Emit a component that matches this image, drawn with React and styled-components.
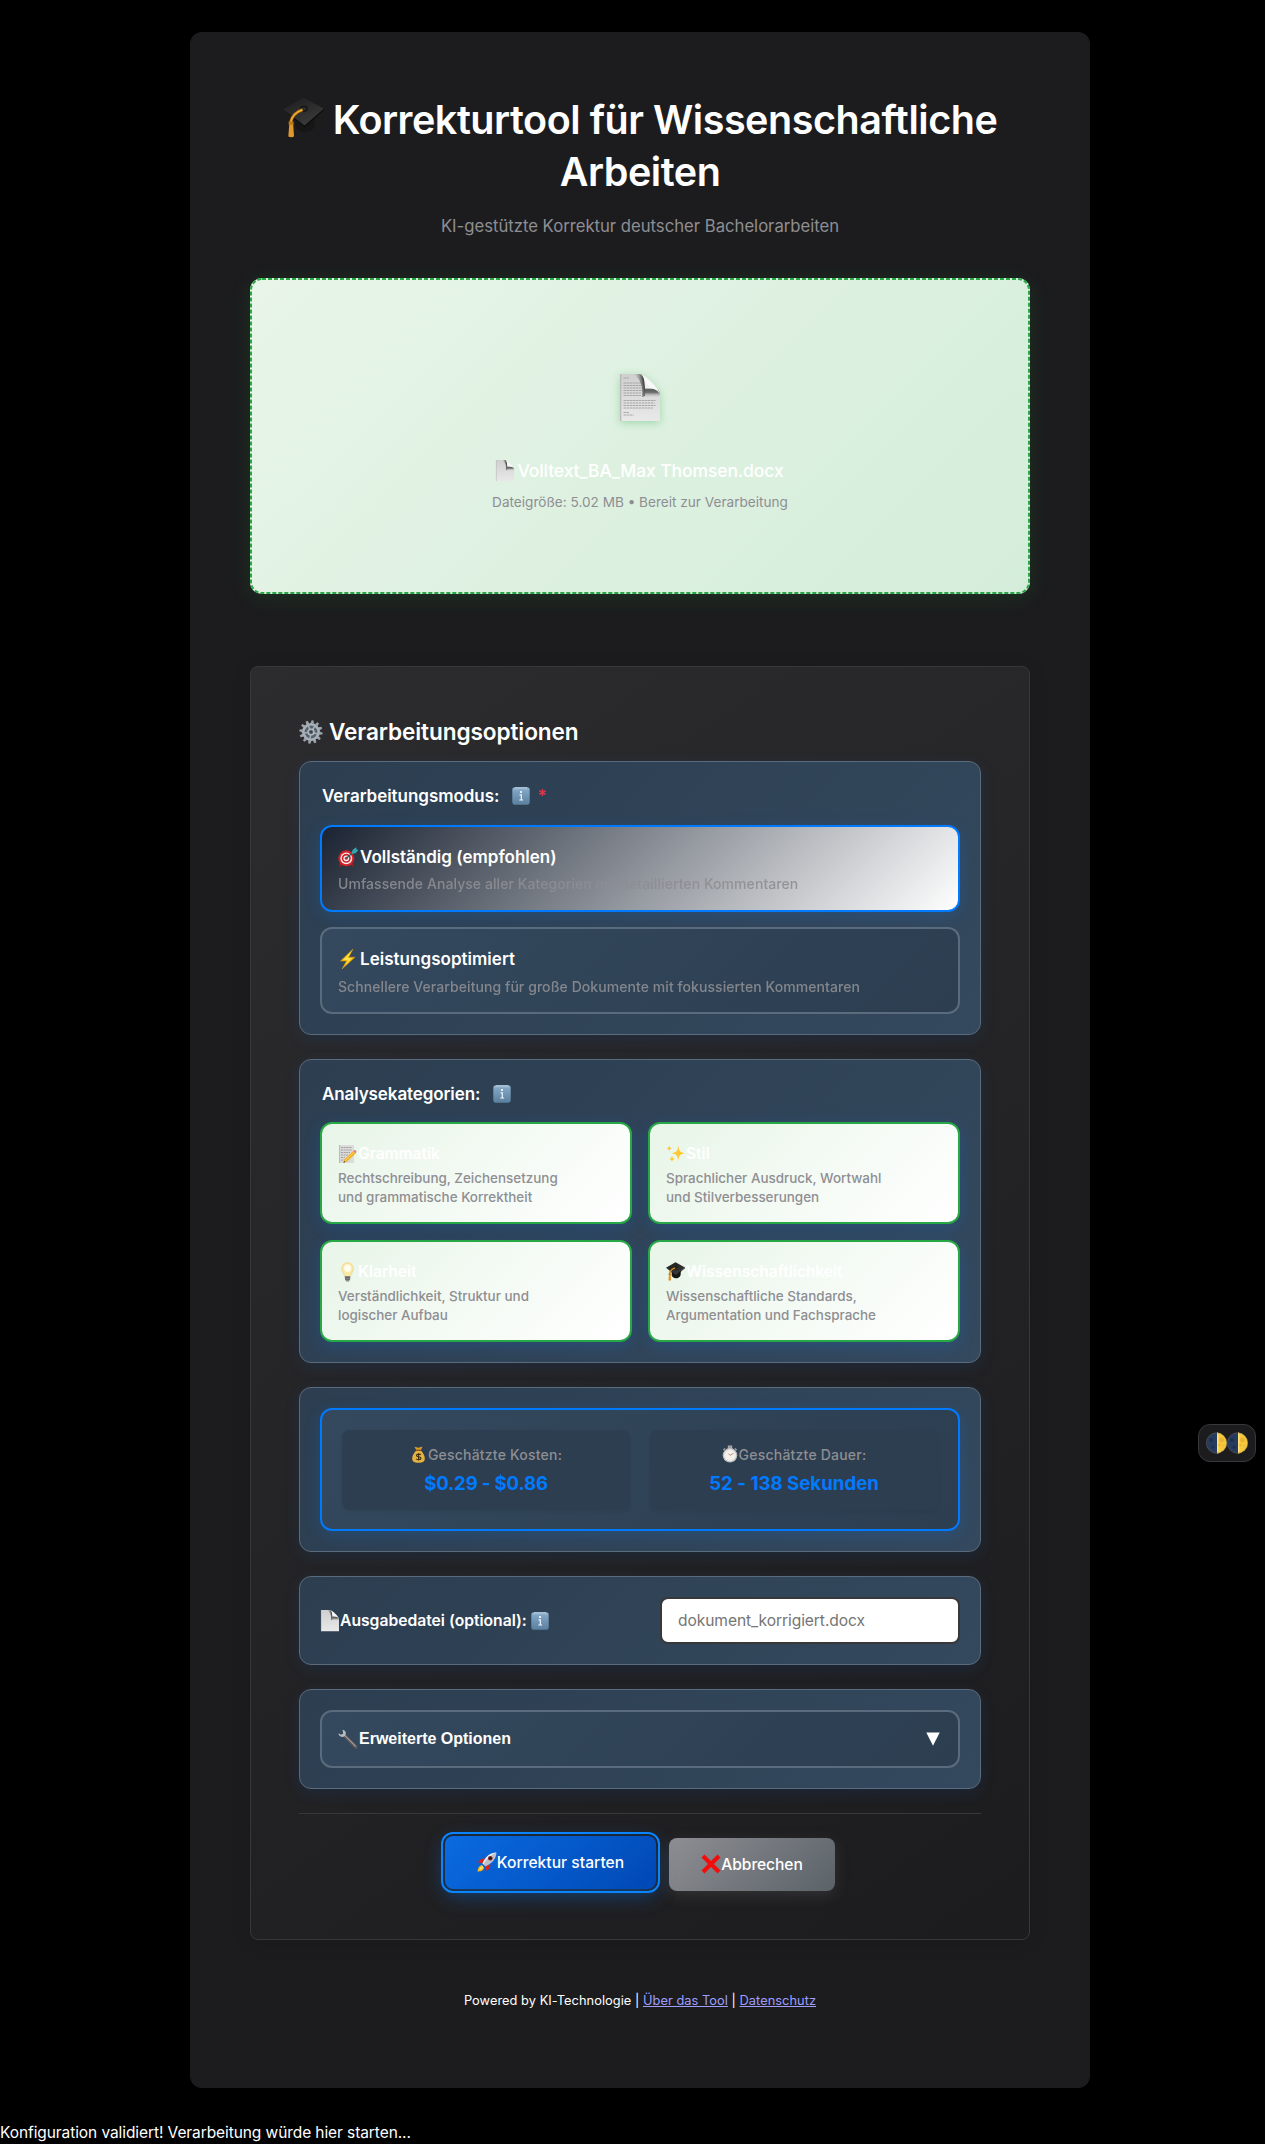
import React from "react";
import styled, { createGlobalStyle, css } from "styled-components";

const sans = `Inter, "Liberation Sans", sans-serif`;

const GlobalStyle = createGlobalStyle`
  * { box-sizing: border-box; }
  body {
    margin: 0;
    background: #000;
    color: #fff;
    font-family: ${sans};
  }
  h1, h2, p { margin: 0; }
`;

/* ---------- icons ---------- */

const Svg = styled.svg`
  display: block;
  flex: none;
  overflow: visible;
`;

const CapIcon = ({ size = 20 }) => (
  <Svg width={size} height={size} viewBox="0 0 40 40">
    <defs>
      <linearGradient id="capTop" x1="0" y1="0" x2="0.6" y2="1">
        <stop offset="0" stopColor="#1b1b1b" />
        <stop offset="1" stopColor="#3b3b3b" />
      </linearGradient>
    </defs>
    <path d="M12 20v9c3 5 9 6 12 5 4-1 7-4 7-8v-9z" fill="#161616" />
    <path d="M20 .5 40 11.500 21 28 0 12z" fill="url(#capTop)" />
    <path d="M0 12 21 28l19-16.500-.2 1.500L21 29.500z" fill="#0c0c0c" />
    <ellipse cx="20.500" cy="11.500" rx="3.200" ry="2.400" fill="#2b2b2b" stroke="#111" />
    <path d="M19 12.500c-6 2-10 5-11.500 12" fill="none" stroke="#a86d12" strokeWidth="3" />
    <path d="M19 12.500c-6 2-10 5-11.500 12" fill="none" stroke="#f0a830" strokeWidth="1.600" />
    <path d="M6.200 25h3.600l1 13.500c-2 1-4 1-5.600 0z" fill="#e0962a" />
    <path d="M5.500 24h4.800v3H5.500z" fill="#b87818" />
  </Svg>
);

const PageIcon = ({ width = 18, lines = true, id }) => (
  <Svg width={width} height={(width * 47) / 40} viewBox="0 0 40 47">
    <defs>
      <linearGradient id={`${id}p`} x1="0" y1="0" x2="0" y2="1">
        <stop offset="0" stopColor="#cfcfcf" />
        <stop offset="1" stopColor="#e9e9e9" />
      </linearGradient>
      <linearGradient id={`${id}a`} x1="0" y1="0.600" x2="1" y2="0.350">
        <stop offset="0.100" stopColor="#cfcfcf" stopOpacity="0" />
        <stop offset="0.900" stopColor="#444" />
      </linearGradient>
      <linearGradient id={`${id}b`} x1="0" y1="0" x2="0" y2="1">
        <stop offset="0" stopColor="#5a5a5a" />
        <stop offset="0.400" stopColor="#6a6a6a" />
        <stop offset="1" stopColor="#dedede" stopOpacity="0" />
      </linearGradient>
      <linearGradient id={`${id}c`} x1="0" y1="1" x2="1" y2="0">
        <stop offset="0" stopColor="#c9c9c9" />
        <stop offset="0.500" stopColor="#fafafa" />
        <stop offset="1" stopColor="#e4e4e4" />
      </linearGradient>
    </defs>
    <path d="M0 0h19c4.500 0 6 4 6 15h8c5 0 7 2 7 6v26H0z" fill={`url(#${id}p)`} />
    <path d="M.7 0v47" stroke="#b5b5b5" strokeWidth="1.200" />
    {lines && (
      <path
        d="M3.500 4h6M3.500 9h19M3.500 11.500h19M3.500 14h19M3.500 16.500h19M3.500 19h18M3.500 21.500h18M3.500 26.500h32M3.500 29h31M3.500 31.500h32M3.500 34h30M3.500 38.500h6M3.500 41h10"
        stroke="#a2a2a2"
        strokeWidth="0.900"
        strokeDasharray="2.500 0.500"
      />
    )}
    <path d="M13 0h6c4.500 0 6 4 6 15v7l-3 1c1-10-1-18-9-23z" fill={`url(#${id}a)`} />
    <path d="M24.500 14.500H33c5 0 7 2.500 7 6.500 0 1-3 3-8 3h-7.500z" fill={`url(#${id}b)`} />
    <path d="M19 0c4.500 1 6 5 6 14.600 8-.6 13 .4 15 6.400C39.500 14.500 27 1.500 19 0z" fill={`url(#${id}c)`} />
  </Svg>
);

const teeth = Array.from({ length: 12 }, (_, i) => i * 30);

const GearIcon = () => (
  <Svg width="24" height="24" viewBox="-12 -12 24 24">
    {teeth.map((a) => (
      <path key={a} d="M-1.700-8.500-1-11.700H1l.7 3.200z" fill="#9aa3ac" transform={`rotate(${a + 8})`} />
    ))}
    <circle r="7.700" fill="#59616b" stroke="#a9b2ba" strokeWidth="2.600" />
    <path d="M0 0 7 2M0 0-1 7M0 0-7 1M0 0-3-7M0 0 4-6" stroke="#a3abb3" strokeWidth="1.600" />
    <circle r="3.600" fill="#b9c1c8" />
    <circle r="2.100" fill="#3a4048" stroke="#7c858e" strokeWidth="0.700" />
  </Svg>
);

const InfoIcon = ({ id }) => (
  <Svg width="18" height="18" viewBox="0 0 18 18">
    <defs>
      <linearGradient id={id} x1="0" y1="0" x2="0" y2="1">
        <stop offset="0" stopColor="#a3c0d8" />
        <stop offset="0.200" stopColor="#7fa3c2" />
        <stop offset="1" stopColor="#5b7f9f" />
      </linearGradient>
    </defs>
    <rect x="0.300" y="0.300" width="17.400" height="17.400" rx="2.800" fill={`url(#${id})`} />
    <path d="M3 .8h12" stroke="#c4d8e8" strokeWidth="0.800" />
    <circle cx="9" cy="5" r="1.100" fill="#fff" />
    <path d="M7.600 7.800h1.700v5M7.300 13h3.800" fill="none" stroke="#f0f5f9" strokeWidth="1.200" />
  </Svg>
);

const TargetIcon = () => (
  <Svg width="20" height="20" viewBox="0 0 20 20">
    <path d="m3 15-1 4.500M13 16l2 3" stroke="#9c2020" strokeWidth="2" />
    <circle cx="8.300" cy="11.300" r="8" fill="#d3202a" />
    <circle cx="8.300" cy="11.300" r="5.900" fill="#f2eeee" />
    <circle cx="8.300" cy="11.300" r="4.500" fill="#d3202a" />
    <circle cx="8.300" cy="11.300" r="2.900" fill="#f2eeee" />
    <circle cx="8.300" cy="11.300" r="1.500" fill="#d3202a" />
    <path d="m8.300 11.300 8-7" stroke="#275f66" strokeWidth="1.300" />
    <path d="m13.500 5.500 1.500-3 3.300-2.300.3 2.300 1.800.6-2.400 3-3.500 1z" fill="#35a5ad" />
  </Svg>
);

const BoltIcon = () => (
  <Svg width="20" height="20" viewBox="0 0 20 20">
    <path d="M15 0 2.500 12h6L4 20 17 8.200h-6.300z" fill="#f5b800" stroke="#d79a14" strokeWidth="0.500" />
    <path d="M13.500 2 5 11h5l-3 6 7-8H9.500z" fill="#ffe14d" />
  </Svg>
);

const MemoIcon = () => (
  <Svg width="19" height="20" viewBox="0 0 19 20">
    <path d="M1 1h15v18H1z" fill="#dcdcdc" />
    <path d="M1 1h1.200v18H1z" fill="#bbb" />
    <path d="M3 3.500h11M3 6h11M3 8.500h9M3 11h7M3 13.500h4M3 16h3" stroke="#9a9a9a" strokeWidth="0.900" strokeDasharray="2 .6" />
    <path d="M15 7.200 17.500 9.500 9 17.500 5.500 18.700 6.500 15.200z" fill="#f0b21e" />
    <path d="m16 8.200-9 8.500" stroke="#fbd765" strokeWidth="0.900" />
    <path d="M15 7.200c1-1.200 1.800-1.700 2.600-1 .9.700 1.300 1.600-.1 3.300z" fill="#ee7d86" />
    <path d="m5.500 18.700.5-1.800 1.300 1.200z" fill="#333" />
  </Svg>
);

const SparkIcon = () => (
  <Svg width="19" height="19" viewBox="0 0 19 19">
    <path
      d="M12.300 1.500c.7 5.500 1.500 6.500 6.500 7.700-5 1-5.800 2.200-6.500 7.600-.7-5.400-1.500-6.600-6.500-7.600 5-1.200 5.800-2.200 6.500-7.700zM3.300 1c.3 2.200.7 2.900 2.700 3.400-2 .5-2.400 1-2.700 3.200C3 5.400 2.600 4.900.6 4.400 2.600 3.900 3 3.200 3.300 1zM6 11.500c.4 2.300.8 2.900 2.800 3.400-2 .4-2.400 1.100-2.800 3.400-.4-2.300-.8-3-2.800-3.400 2-.5 2.400-1.100 2.800-3.400z"
      fill="#ffc933"
    />
  </Svg>
);

const BulbIcon = () => (
  <Svg width="19" height="20" viewBox="0 0 19 20">
    <path d="M9.500.8c3.500 0 5.800 2.500 5.800 5.700 0 3.500-2.300 4.800-3 8H6.800c-.7-3.200-3-4.500-3-8C3.800 3.300 6.100.8 9.500.8z" fill="#fbe9a8" stroke="#ecd28a" strokeWidth="0.800" />
    <ellipse cx="9.500" cy="6.200" rx="3.400" ry="3.700" fill="#fffdf0" />
    <path d="M6.900 14h5.300v3l-1.200 2.400H8.100L6.900 17z" fill="#8d8d8d" />
    <path d="M6.900 15.300h5.300M7 17.200h5" stroke="#4f4f4f" strokeWidth="0.700" />
  </Svg>
);

const MoneyIcon = () => (
  <Svg width="13" height="17" viewBox="0 0 13 17">
    <path d="M2.500.8 6.500 1.800 10.500.5 8.800 4.500H4.400z" fill="#d99c2b" />
    <path d="M4.300 4.500h4.600c1.700 2 3.900 4.500 3.900 8 0 3-2 4.300-6.300 4.300S.2 15.500.2 12.500c0-3.500 2.300-6 4.100-8z" fill="#e6b23f" />
    <path d="M4 4.300h5.100" stroke="#8a4f1c" strokeWidth="1.200" />
    <path d="M8.800 8.800c-.5-.9-4.300-1.200-4.300.7 0 1.800 4.500.8 4.500 2.700 0 1.800-4 1.700-4.800.5M6.600 7.200v7.400" fill="none" stroke="#3c2c10" strokeWidth="1.100" />
  </Svg>
);

const TimerIcon = () => (
  <Svg width="16" height="17" viewBox="0 0 16 17">
    <path d="M6.400 0h3.200v3H6.400zM1.300 4l2-1.500M14.700 4l-2-1.500" fill="#999" stroke="#aaa" strokeWidth="1.200" />
    <circle cx="8" cy="9.300" r="7.300" fill="#bdbdbd" />
    <circle cx="8" cy="9.300" r="6" fill="#f4f1ec" />
    <path d="M8 9.300 6.300 7.500M8 9.300l3.500-2" stroke="#9b6b50" strokeWidth="0.700" />
    <circle cx="8" cy="9.300" r="4.900" fill="none" stroke="#bbb" strokeWidth="0.700" strokeDasharray=".5 2" />
  </Svg>
);

const WrenchIcon = () => (
  <Svg width="20" height="20" viewBox="0 0 20 20">
    <path d="m7 7 11 11" stroke="#5e5558" strokeWidth="3.400" strokeLinecap="round" />
    <path d="m6.500 6.200 11.300 11.300" stroke="#a0989b" strokeWidth="1.200" />
    <path d="M4.500.8C7 1 8.300 3 7.700 5.300c-.3 1.800-2.300 3-4.300 2.500C1.600 7.300.5 6 .5 4.300l2.700 1.500 2-1.300z" fill="#b4bcc2" />
  </Svg>
);

const RocketIcon = () => (
  <Svg width="20" height="20" viewBox="0 0 20 20">
    <path d="M5 13c-3.500 1-4 3.500-4.500 6.500 3 0 6-.6 6.500-4z" fill="#fbb616" />
    <path d="M5.500 14c-2 .8-3 2.400-3.300 4 1.700-.1 3.400-1 4-2.700z" fill="#ffe769" />
    <path d="M8 6.500C4.500 6 2 8 1 10.500l4.800.8zM13.200 11.800c.6 3.300-1 5.700-3.600 7.200l-1.200-4.600z" fill="#d8231f" />
    <path d="M19.500.5C14 .8 9 3.500 5.500 11.500l3 3C16 11 19.200 6 19.500.5z" fill="#b9c2cb" />
    <path d="M19.500.5C14 .8 9 3.500 5.500 11.500l1 1C10 6 14 3 19.500.5z" fill="#e9edf0" />
    <circle cx="13.300" cy="6.300" r="2.300" fill="#8d2020" />
    <circle cx="13.300" cy="6.300" r="1.300" fill="#191c26" />
  </Svg>
);

const CrossIcon = () => (
  <Svg width="20" height="20" viewBox="0 0 20 20">
    <path d="M2 2 18 18M18 2 2 18" stroke="#f20d0d" strokeWidth="4.200" />
  </Svg>
);

const MoonIcon = ({ id }) => (
  <Svg width="21" height="22" viewBox="0 0 21 22">
    <defs>
      <clipPath id={id}>
        <circle cx="10.500" cy="11" r="10.400" />
      </clipPath>
    </defs>
    <g clipPath={`url(#${id})`}>
      <path d="M0 0h21v22H0z" fill="#263b5e" />
      <path d="M11 0h10v22H11z" fill="#f8c93a" />
      <path d="M11 0h1.500v22H11z" fill="#fbe27d" />
      <circle cx="15.500" cy="8" r="2.400" fill="#e8b336" />
      <circle cx="13.500" cy="13" r="1.300" fill="#eab73a" />
      <circle cx="17.500" cy="14" r="1.600" fill="#efbf3c" />
      <circle cx="5" cy="8" r="2" fill="#1d2f4e" />
      <circle cx="7" cy="15" r="1.500" fill="#1d2f4e" />
    </g>
    <circle cx="10.500" cy="11" r="10.200" fill="none" stroke="#6f6a4b" strokeOpacity="0.600" strokeWidth="0.700" />
  </Svg>
);

/* ---------- page ---------- */

const Page = styled.div`
  width: 1265px;
  padding-top: 32px;
`;

const Container = styled.main`
  width: 900px;
  height: 2056px;
  margin-left: 190px;
  padding: 62px 60px 0;
  border-radius: 12px;
  background: #1c1c1e;
`;

const Title = styled.h1`
  font-size: 39.5px;
  font-weight: 600;
  line-height: 52px;
  letter-spacing: -0.465px;
  text-align: center;
  svg {
    display: inline-block;
    margin-right: 9px;
    vertical-align: -4px;
  }
`;

const Subtitle = styled.p`
  margin-top: 16px;
  font-size: 16.7px;
  line-height: 24px;
  letter-spacing: -0.01px;
  text-align: center;
  color: #8e8e93;
`;

const UploadZone = styled.section`
  position: relative;
  display: flex;
  flex-direction: column;
  align-items: center;
  height: 316px;
  margin-top: 40px;
  padding-top: 96px;
  border-radius: 12px;
  background: linear-gradient(135deg, #e8f5e8, #d4edda);
  box-shadow: 0 4px 20px rgba(40, 167, 69, 0.15);
`;

const UploadOutline = styled.svg`
  position: absolute;
  inset: 0;
  pointer-events: none;
`;

const UploadIcon = styled.div`
  filter: drop-shadow(0 2px 4px rgba(40, 167, 69, 0.35));
`;

const FileName = styled.p`
  display: flex;
  align-items: center;
  gap: 3px;
  margin-top: 36px;
  font-size: 17.5px;
  font-weight: 500;
  line-height: 28px;
  letter-spacing: -0.1px;
`;

const FileMeta = styled.p`
  margin-top: 7px;
  font-size: 13.6px;
  line-height: 20px;
  color: #8e8e93;
`;

const Panel = styled.section`
  height: 1274px;
  margin-top: 72px;
  padding: 48px;
  border: 1px solid #38383a;
  border-radius: 8px;
  background: linear-gradient(145deg, #2c2c2e, #1c1c1e);
  box-shadow: 0 4px 20px rgba(0, 0, 0, 0.1);
`;

const PanelTitle = styled.h2`
  display: flex;
  align-items: center;
  gap: 6px;
  margin-bottom: 13px;
  font-size: 22.6px;
  font-weight: 600;
  line-height: 33px;
  letter-spacing: -0.1px;
`;

const Card = styled.div`
  height: ${(p) => p.$height}px;
  margin-bottom: 24px;
  padding: 20px;
  border: 1px solid #5a6b7d;
  border-radius: 12px;
  background: linear-gradient(135deg, #2c3e50, #34495e);
  box-shadow: 0 4px 16px rgba(0, 122, 255, 0.1);
`;

const CardLabel = styled.div`
  display: flex;
  align-items: center;
  height: 28px;
  margin-bottom: ${(p) => p.$gap}px;
  padding-left: 2px;
  font-size: 17px;
  font-weight: 600;
  letter-spacing: ${(p) => p.$spacing}px;
  svg { margin-left: 13px; }
`;

const Required = styled.span`
  margin: -1px 0 0 7px;
  font-size: 17px;
  font-weight: 600;
  color: #dc3545;
`;

const glow = css`
  box-shadow: 0 4px 16px rgba(0, 122, 255, 0.2);
`;

const ModeOption = styled.div`
  height: 87px;
  margin-bottom: 15px;
  padding: 16px;
  border: 2px solid ${(p) => (p.$selected ? "#007aff" : "#5a6b7d")};
  border-radius: 12px;
  background: ${(p) =>
    p.$selected ? "linear-gradient(135deg, #1a2332, #fff)" : "linear-gradient(135deg, #34495e, #2c3e50)"};
  ${(p) => p.$selected && glow}
`;

const ModeTitle = styled.div`
  display: flex;
  align-items: center;
  gap: 2px;
  height: 28px;
  font-size: 17px;
  font-weight: 600;
  letter-spacing: ${(p) => p.$spacing}px;
`;

const ModeText = styled.div`
  margin-top: ${(p) => p.$gap}px;
  font-size: 14px;
  font-weight: 500;
  line-height: 23px;
  letter-spacing: 0.07px;
  color: #8e8e93;
  opacity: 0.9;
`;

const CategoryGrid = styled.div`
  display: grid;
  grid-template-columns: 1fr 1fr;
  gap: 16px;
`;

const Category = styled.div`
  height: 102px;
  padding: 17px 16px 0;
  border: 2px solid #28a745;
  border-radius: 12px;
  background: linear-gradient(135deg, #e8f5e8, #fff);
  ${glow}
`;

const CategoryTitle = styled.div`
  display: flex;
  align-items: center;
  gap: 1px;
  height: 25px;
  font-size: 15.6px;
  font-weight: 600;
  letter-spacing: -0.03px;
`;

const CategoryText = styled.div`
  width: 232px;
  margin-top: 3px;
  font-size: 13.450px;
  font-weight: 500;
  line-height: 19px;
  color: #8e8e93;
`;

const Estimate = styled.div`
  display: grid;
  grid-template-columns: 1fr 1fr;
  gap: 20px;
  height: 123px;
  padding: 20px;
  border: 2px solid #007aff;
  border-radius: 12px;
  background: linear-gradient(135deg, #34495e, #2c3e50);
  ${glow}
`;

const EstimateItem = styled.div`
  display: flex;
  flex-direction: column;
  align-items: center;
  height: 80px;
  padding-top: 12px;
  border-radius: 8px;
  background: #2c3e50;
  box-shadow: 0 2px 4px rgba(0, 0, 0, 0.05);
`;

const EstimateLabel = styled.div`
  display: flex;
  align-items: center;
  gap: ${(p) => p.$gap}px;
  height: 24px;
  padding-left: ${(p) => p.$shift}px;
  font-size: 14px;
  font-weight: 500;
  letter-spacing: 0.21px;
  color: #8e8e93;
`;

const EstimateValue = styled.div`
  margin-top: 2px;
  font-size: 18.6px;
  font-weight: 700;
  line-height: 30px;
  letter-spacing: ${(p) => p.$spacing}px;
  color: #007aff;
`;

const OutputRow = styled.div`
  display: flex;
  align-items: center;
  justify-content: space-between;
  height: 47px;
`;

const OutputLabel = styled.label`
  display: flex;
  align-items: center;
  gap: 1px;
  padding: 1px 0 0 1px;
  font-size: 15.7px;
  font-weight: 600;
  letter-spacing: -0.01px;
  svg:last-child { margin-left: 3px; }
`;

const OutputInput = styled.input`
  width: 300px;
  height: 47px;
  padding: 1px 16px 0;
  border: 2px solid #38383a;
  border-radius: 8px;
  outline: none;
  background: #fff;
  font-family: ${sans};
  font-size: 15.6px;
  letter-spacing: -0.09px;
  &::placeholder { color: #757575; opacity: 1; }
`;

const AdvancedToggle = styled.div`
  display: flex;
  align-items: center;
  gap: 1px;
  height: 58px;
  padding: 1px 18px 0 16px;
  border: 2px solid #5a6b7d;
  border-radius: 12px;
  background: linear-gradient(135deg, #34495e, #2c3e50);
  font-family: "Liberation Sans", Arial, sans-serif;
  font-size: 16px;
  font-weight: 700;
`;

const Arrow = styled.svg`
  margin-left: auto;
`;

const Actions = styled.div`
  display: flex;
  justify-content: center;
  gap: 13px;
  padding-top: 24px;
  border-top: 1px solid #38383a;
`;

const Button = styled.button`
  display: flex;
  align-items: center;
  justify-content: center;
  height: 53px;
  padding: 0;
  border: 0;
  border-radius: 8px;
  color: #fff;
  font-family: ${sans};
  font-size: 15.6px;
  font-weight: 500;
  white-space: nowrap;
`;

const StartButton = styled(Button)`
  width: 211px;
  letter-spacing: 0.03px;
  background: linear-gradient(135deg, #0a6be0, #0048b5);
  outline: 2px solid #0a84ff;
  outline-offset: 2px;
  box-shadow: 0 6px 20px rgba(0, 122, 255, 0.4);
  transform: translateY(-2px);
`;

const CancelButton = styled(Button)`
  width: 166px;
  letter-spacing: -0.08px;
  background: linear-gradient(135deg, #8e8e93, #5a6268);
  box-shadow: 0 4px 15px rgba(142, 142, 147, 0.2);
`;

const Footer = styled.footer`
  margin-top: 51px;
  font-size: 12.8px;
  line-height: 20px;
  letter-spacing: 0.050px;
  text-align: center;
  a { color: #9e9eff; }
`;

const Status = styled.p`
  margin-top: 33px;
  font-size: 15.5px;
  line-height: 23px;
  letter-spacing: -0.085px;
`;

const ThemeToggle = styled.button`
  position: fixed;
  top: 1424px;
  left: 1198px;
  display: flex;
  align-items: center;
  justify-content: center;
  width: 58px;
  height: 38px;
  padding: 0;
  border: 1px solid #38383a;
  border-radius: 12px;
  background: #1c1c1e;
`;

const categories = [
  { icon: <MemoIcon />, title: "Grammatik", text: "Rechtschreibung, Zeichensetzung und grammatische Korrektheit" },
  { icon: <SparkIcon />, title: "Stil", text: "Sprachlicher Ausdruck, Wortwahl und Stilverbesserungen" },
  { icon: <BulbIcon />, title: "Klarheit", text: "Verständlichkeit, Struktur und logischer Aufbau" },
  {
    icon: <CapIcon size={19} />,
    title: "Wissenschaftlichkeit",
    text: "Wissenschaftliche Standards, Argumentation und Fachsprache",
  },
];

export default function App() {
  return (
    <Page>
      <GlobalStyle />
      <Container>
        <Title>
          <CapIcon size={41} />
          Korrekturtool für Wissenschaftliche Arbeiten
        </Title>
        <Subtitle>KI-gestützte Korrektur deutscher Bachelorarbeiten</Subtitle>

        <UploadZone>
          <UploadOutline width="780" height="316">
            <rect
              x="1"
              y="1"
              width="778"
              height="314"
              rx="11"
              fill="none"
              stroke="#28a745"
              strokeWidth="2"
              strokeDasharray="4 2"
            />
          </UploadOutline>
          <UploadIcon>
            <PageIcon width={40} id="big" />
          </UploadIcon>
          <FileName>
            <PageIcon width={18} lines={false} id="file" />
            Volltext_BA_Max Thomsen.docx
          </FileName>
          <FileMeta>Dateigröße: 5.02 MB • Bereit zur Verarbeitung</FileMeta>
        </UploadZone>

        <Panel>
          <PanelTitle>
            <GearIcon />
            Verarbeitungsoptionen
          </PanelTitle>

          <Card $height={274}>
            <CardLabel $gap={15} $spacing={-0.04}>
              Verarbeitungsmodus:
              <InfoIcon id="infoMode" />
              <Required>*</Required>
            </CardLabel>
            <ModeOption $selected>
              <ModeTitle $spacing={0}>
                <TargetIcon />
                Vollständig (empfohlen)
              </ModeTitle>
              <ModeText $gap={1}>Umfassende Analyse aller Kategorien mit detaillierten Kommentaren</ModeText>
            </ModeOption>
            <ModeOption>
              <ModeTitle $spacing={0.03}>
                <BoltIcon />
                Leistungsoptimiert
              </ModeTitle>
              <ModeText $gap={2}>Schnellere Verarbeitung für große Dokumente mit fokussierten Kommentaren</ModeText>
            </ModeOption>
          </Card>

          <Card $height={304.4}>
            <CardLabel $gap={14} $spacing={-0.1}>
              Analysekategorien:
              <InfoIcon id="infoCategories" />
            </CardLabel>
            <CategoryGrid>
              {categories.map((c) => (
                <Category key={c.title}>
                  <CategoryTitle>
                    {c.icon}
                    {c.title}
                  </CategoryTitle>
                  <CategoryText>{c.text}</CategoryText>
                </Category>
              ))}
            </CategoryGrid>
          </Card>

          <Card $height={164.6}>
            <Estimate>
              <EstimateItem>
                <EstimateLabel $gap={3} $shift={2}>
                  <MoneyIcon />
                  Geschätzte Kosten:
                </EstimateLabel>
                <EstimateValue $spacing={-0.159}>$0.29 - $0.86</EstimateValue>
              </EstimateItem>
              <EstimateItem>
                <EstimateLabel $gap={1} $shift={0}>
                  <TimerIcon />
                  Geschätzte Dauer:
                </EstimateLabel>
                <EstimateValue $spacing={0.029}>52 - 138 Sekunden</EstimateValue>
              </EstimateItem>
            </Estimate>
          </Card>

          <Card $height={89}>
            <OutputRow>
              <OutputLabel htmlFor="output">
                <PageIcon width={18} lines={false} id="out" />
                Ausgabedatei (optional):
                <InfoIcon id="infoOutput" />
              </OutputLabel>
              <OutputInput id="output" placeholder="dokument_korrigiert.docx" />
            </OutputRow>
          </Card>

          <Card $height={100}>
            <AdvancedToggle>
              <WrenchIcon />
              Erweiterte Optionen
              <Arrow width="14" height="14" viewBox="0 0 14 14">
                <path d="M.3.500h13.400L7 13.700z" fill="#fff" />
              </Arrow>
            </AdvancedToggle>
          </Card>

          <Actions>
            <StartButton>
              <RocketIcon />
              Korrektur starten
            </StartButton>
            <CancelButton>
              <CrossIcon />
              Abbrechen
            </CancelButton>
          </Actions>
        </Panel>

        <Footer>
          Powered by KI-Technologie | <a href="#tool">Über das Tool</a> | <a href="#datenschutz">Datenschutz</a>
        </Footer>
      </Container>
      <Status>Konfiguration validiert! Verarbeitung würde hier starten...</Status>
      <ThemeToggle aria-label="Design wechseln">
        <MoonIcon id="moonLeft" />
        <MoonIcon id="moonRight" />
      </ThemeToggle>
    </Page>
  );
}
